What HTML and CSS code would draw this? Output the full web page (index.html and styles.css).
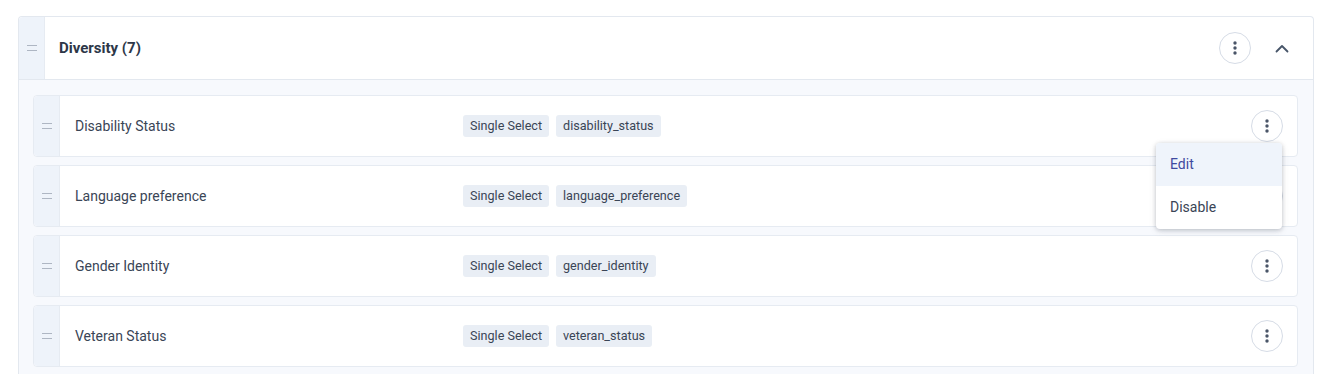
FILE: index.html
```html
<!doctype html>
<html lang="en">
  <head>
    <meta charset="utf-8">
    <title>Custom fields - Diversity</title>
    <link rel="stylesheet" href="styles.css">
  </head>
  <body>

    <div class="group">
      <div class="group-head">
        <div class="handle"><span class="grip"></span></div>
        <div class="group-title">Diversity (7)</div>
        <div class="group-actions">
          <button class="kebab" type="button">
            <svg width="4" height="14" viewBox="0 0 4 14"><circle cx="2" cy="2" r="1.7"/><circle cx="2" cy="7" r="1.7"/><circle cx="2" cy="12" r="1.7"/></svg>
          </button>
          <button class="collapse" type="button">
            <svg width="14" height="9" viewBox="0 0 14 9"><path d="M1.5 7.5 L7 2 L12.5 7.5" fill="none" stroke="#475569" stroke-width="1.8" stroke-linecap="round" stroke-linejoin="round"/></svg>
          </button>
        </div>
      </div>

      <div class="group-body">

        <div class="field">
          <div class="handle"><span class="grip"></span></div>
          <div class="field-name">Disability Status</div>
          <div class="tags">
            <span class="tag">Single Select</span>
            <span class="tag">disability_status</span>
          </div>
          <div class="field-actions">
            <button class="kebab" type="button">
              <svg width="4" height="14" viewBox="0 0 4 14"><circle cx="2" cy="2" r="1.7"/><circle cx="2" cy="7" r="1.7"/><circle cx="2" cy="12" r="1.7"/></svg>
            </button>
            <div class="menu">
              <a class="menu-item active" href="#">Edit</a>
              <a class="menu-item" href="#">Disable</a>
            </div>
          </div>
        </div>

        <div class="field">
          <div class="handle"><span class="grip"></span></div>
          <div class="field-name">Language preference</div>
          <div class="tags">
            <span class="tag">Single Select</span>
            <span class="tag">language_preference</span>
          </div>
          <div class="field-actions">
            <button class="kebab" type="button">
              <svg width="4" height="14" viewBox="0 0 4 14"><circle cx="2" cy="2" r="1.7"/><circle cx="2" cy="7" r="1.7"/><circle cx="2" cy="12" r="1.7"/></svg>
            </button>
          </div>
        </div>

        <div class="field">
          <div class="handle"><span class="grip"></span></div>
          <div class="field-name">Gender Identity</div>
          <div class="tags">
            <span class="tag">Single Select</span>
            <span class="tag">gender_identity</span>
          </div>
          <div class="field-actions">
            <button class="kebab" type="button">
              <svg width="4" height="14" viewBox="0 0 4 14"><circle cx="2" cy="2" r="1.7"/><circle cx="2" cy="7" r="1.7"/><circle cx="2" cy="12" r="1.7"/></svg>
            </button>
          </div>
        </div>

        <div class="field">
          <div class="handle"><span class="grip"></span></div>
          <div class="field-name">Veteran Status</div>
          <div class="tags">
            <span class="tag">Single Select</span>
            <span class="tag">veteran_status</span>
          </div>
          <div class="field-actions">
            <button class="kebab" type="button">
              <svg width="4" height="14" viewBox="0 0 4 14"><circle cx="2" cy="2" r="1.7"/><circle cx="2" cy="7" r="1.7"/><circle cx="2" cy="12" r="1.7"/></svg>
            </button>
          </div>
        </div>

      </div>
    </div>

  </body>
</html>
```

FILE: styles.css
```css
html, body
{
  margin: 0;
  padding: 0;
}

body
{
  background: #ffffff;
  font-family: Roboto, "Liberation Sans", sans-serif;
  color: #334155;
  padding: 16px 15px 0 18px;
  overflow: hidden;
}

button
{
  font: inherit;
  padding: 0;
  background: none;
  border: 0;
  cursor: pointer;
}

/* group card */
.group
{
  border: 1px solid #e3e8ef;
  border-bottom: 0;
  border-radius: 4px 4px 0 0;
  background: #f7f9fd;
}

.group-head
{
  display: flex;
  align-items: stretch;
  height: 62px;
  background: #ffffff;
  border-bottom: 1px solid #e3e8ef;
  border-radius: 4px 4px 0 0;
}

.handle
{
  flex: 0 0 25px;
  display: flex;
  align-items: center;
  justify-content: center;
  background: #eef3fa;
  border-right: 1px solid #e6ebf2;
}

.group-head .handle
{
  border-radius: 4px 0 0 0;
}

.grip
{
  display: block;
  width: 10px;
  height: 4px;
  border-top: 1.5px solid #aeb6c3;
  border-bottom: 1.5px solid #aeb6c3;
}

.group-title
{
  flex: 1;
  display: flex;
  align-items: center;
  padding-left: 14px;
  font-size: 15px;
  font-weight: 700;
  color: #2d3748;
}

.group-actions
{
  display: flex;
  align-items: center;
  gap: 15px;
  padding-right: 15px;
}

.kebab
{
  width: 32px;
  height: 32px;
  border-radius: 50%;
  border: 1px solid #d6dce6;
  background: #ffffff;
  display: flex;
  align-items: center;
  justify-content: center;
}

.kebab svg
{
  fill: #4a5568;
}

.collapse
{
  width: 32px;
  height: 32px;
  display: flex;
  align-items: center;
  justify-content: center;
}

/* field rows */
.group-body
{
  display: flex;
  flex-direction: column;
  gap: 8px;
  padding: 15px 15px 0 14px;
  height: 279px;
}

.field
{
  display: flex;
  align-items: stretch;
  height: 60px;
  background: #ffffff;
  border: 1px solid #e6ebf2;
  border-radius: 4px;
}

.field .handle
{
  border-radius: 4px 0 0 4px;
}

.field-name
{
  flex: 0 0 388px;
  display: flex;
  align-items: center;
  padding-left: 15px;
  font-size: 14px;
  color: #3a4556;
}

.tags
{
  flex: 1;
  display: flex;
  align-items: center;
  gap: 7px;
}

.tag
{
  height: 22px;
  line-height: 22px;
  padding: 0 7px;
  border-radius: 3px;
  background: #e9eef5;
  font-size: 12.6px;
  color: #3a4556;
}

.field-actions
{
  position: relative;
  display: flex;
  align-items: center;
  padding-right: 14px;
}

/* dropdown */
.menu
{
  position: absolute;
  top: 47px;
  right: 15px;
  z-index: 5;
  width: 126px;
  background: #ffffff;
  border-radius: 4px;
  box-shadow: 0 1px 4px rgba(15, 23, 42, 0.22), 0 2px 8px rgba(15, 23, 42, 0.08);
  overflow: hidden;
}

.menu-item
{
  display: block;
  height: 43px;
  line-height: 43px;
  padding-left: 14px;
  font-size: 14px;
  color: #3a4556;
  text-decoration: none;
}

.menu-item.active
{
  background: #eff4fb;
  color: #3f4aa0;
}
```
